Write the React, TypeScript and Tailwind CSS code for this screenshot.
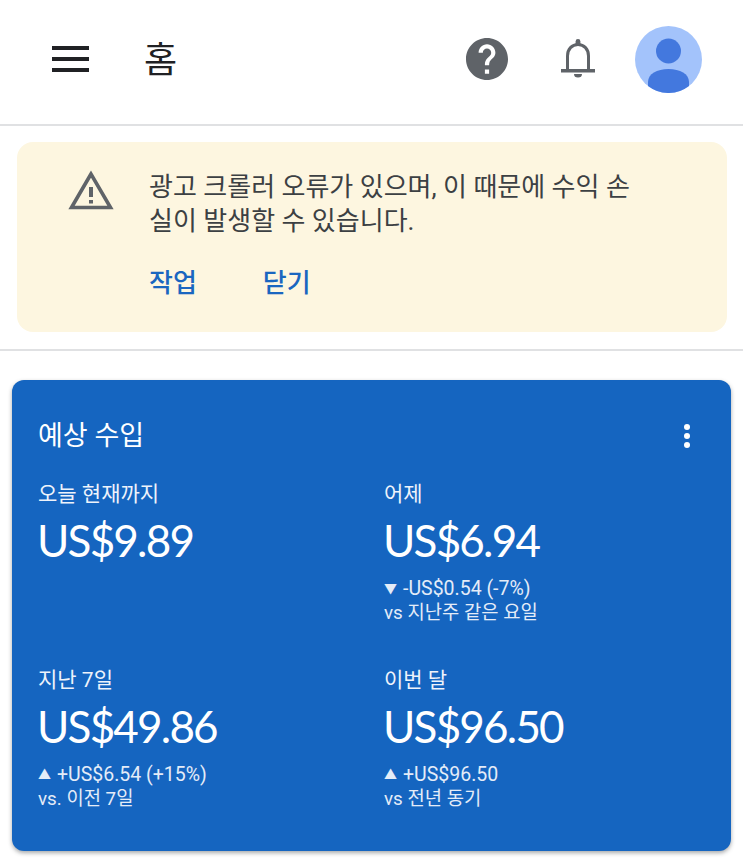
const kr = "font-['Roboto','Noto_Sans_CJK_KR',sans-serif]"

function Menu() {
  return (
    <svg width="37" height="26" viewBox="0 0 37 26" className="shrink-0">
      <rect x="0" y="0" width="37" height="4" fill="#202124" />
      <rect x="0" y="11" width="37" height="4" fill="#202124" />
      <rect x="0" y="22" width="37" height="4" fill="#202124" />
    </svg>
  )
}

function Help() {
  return (
    <svg width="42" height="42" viewBox="0 0 24 24" className="shrink-0">
      <path fill="#5f6368" d="M12 0C5.37 0 0 5.37 0 12s5.37 12 12 12 12-5.37 12-12S18.63 0 12 0zm1.2 20.4h-2.4V18h2.4v2.4zm2.48-9.3-1.08 1.1c-.86.88-1.4 1.6-1.4 3.4h-2.4v-.6c0-1.32.54-2.52 1.4-3.4l1.49-1.51c.44-.43.71-1.03.71-1.69 0-1.32-1.08-2.4-2.4-2.4S9.6 7.08 9.6 8.4H7.2c0-2.65 2.15-4.8 4.8-4.8s4.8 2.15 4.8 4.8c0 1.06-.43 2.02-1.12 2.7z" />
    </svg>
  )
}

function Bell() {
  return (
    <svg width="36" height="42" viewBox="0 0 36 42" className="shrink-0" fill="none">
      <path d="M7.5 32V18C7.500 11 12 6.500 18 6.500S28.500 11 28.500 18v14" stroke="#5f6368" strokeWidth="3" />
      <rect x="1" y="31" width="34" height="3.500" fill="#5f6368" />
      <rect x="15.6" y="1" width="4.8" height="7" rx="2.4" fill="#5f6368" />
      <path d="M14 36h8a4 3.500 0 0 1-8 0z" fill="#5f6368" />
    </svg>
  )
}

function Avatar() {
  return (
    <svg width="67" height="67" viewBox="0 0 67 67" className="shrink-0">
      <circle cx="33.5" cy="33.5" r="33.5" fill="#a3c3fb" />
      <circle cx="33.5" cy="25" r="12.5" fill="#4378de" />
      <path d="M13 60v-4c0-8 9-13 20.500-13S54 48 54 56v4a33.500 33.500 0 0 1-41 0z" fill="#4378de" />
    </svg>
  )
}

function Warning() {
  return (
    <svg width="46" height="40" viewBox="0 0 46 40" className="shrink-0" fill="none">
      <path d="M23 4 3.500 37.500h39z" stroke="#5f6368" strokeWidth="3.6" />
      <rect x="21" y="17" width="4" height="10" fill="#5f6368" />
      <rect x="21" y="30" width="4" height="3.5" fill="#5f6368" />
    </svg>
  )
}

function Stat({ label, value, delta, compare, up }: { label: string; value: string; delta?: string; compare?: string; up?: boolean }) {
  return (
    <div className="flex flex-col text-white">
      <div className="text-[21px] leading-[26px] text-[#eef3fb]">{label}</div>
      <div className="-ml-[1px] mt-[7px] font-['Lato',sans-serif] text-[44px] leading-[52px] tracking-[-1.8px]">{value}</div>
      {delta && (
        <div className="mt-[10px] flex items-center gap-[6px] text-[19.500px] leading-[25px] text-[#e4ecf8]">
          <span className="text-[13px]">{up ? '▲' : '▼'}</span>
          <span>{delta}</span>
        </div>
      )}
      {compare && <div className="text-[18.800px] leading-[25px] text-[#e4ecf8]">{compare}</div>}
    </div>
  )
}

export default function App() {
  return (
    <div className={`${kr} h-[861px] w-[743px] overflow-hidden bg-white`}>
      {/* Top bar */}
      <header className="flex h-[126px] items-center border-b-2 border-[#e0e1e3] pb-[6px] pl-[52px] pr-[41px]">
        <Menu />
        <h1 className="ml-[55px] mt-[3px] flex-1 text-[36px] font-normal leading-none text-[#202124]">홈</h1>
        <Help />
        <div className="ml-[52px] mr-[39px]"><Bell /></div>
        <Avatar />
      </header>

      {/* Ad crawler notice */}
      <div className="pl-[17px] pr-[16px] pt-[16px]">
        <div className="flex h-[190px] rounded-[16px] bg-[#fdf6e0] pl-[51px] pr-[90px] pt-[28px]">
          <Warning />
          <div className="ml-[35px] min-w-0">
            <p className="break-all text-[26px] leading-[34px] text-[#3c4043]">광고 크롤러 오류가 있으며, 이 때문에 수익 손실이 발생할 수 있습니다.</p>
            <div className="mt-[28px] flex gap-[66px] text-[26px] font-medium leading-[34px] text-[#1a66c0]">
              <span>작업</span>
              <span>닫기</span>
            </div>
          </div>
        </div>
      </div>

      <div className="mt-[17px] h-[2px] bg-[#e0e1e3]" />

      {/* Estimated earnings */}
      <section className="mx-[12px] mt-[29px] h-[471px] rounded-[12px] bg-[#1565c0] px-[26px] pt-[38px] shadow-[0_2px_4px_rgba(60,64,67,0.45)]">
        <div className="flex items-center justify-between pr-[15px]">
          <h2 className="text-[27px] font-normal leading-[36px] text-white">예상 수입</h2>
          <div className="flex flex-col gap-[3px]">
            <span className="h-[6px] w-[6px] rounded-full bg-white" />
            <span className="h-[6px] w-[6px] rounded-full bg-white" />
            <span className="h-[6px] w-[6px] rounded-full bg-white" />
          </div>
        </div>
        <div className="mt-[27px] grid grid-cols-[346px_1fr]">
          <div className="h-[186px]"><Stat label="오늘 현재까지" value="US$9.89" /></div>
          <Stat label="어제" value="US$6.94" delta="-US$0.54 (-7%)" compare="vs 지난주 같은 요일" />
          <Stat label="지난 7일" value="US$49.86" delta="+US$6.54 (+15%)" compare="vs. 이전 7일" up />
          <Stat label="이번 달" value="US$96.50" delta="+US$96.50" compare="vs 전년 동기" up />
        </div>
      </section>
    </div>
  )
}
